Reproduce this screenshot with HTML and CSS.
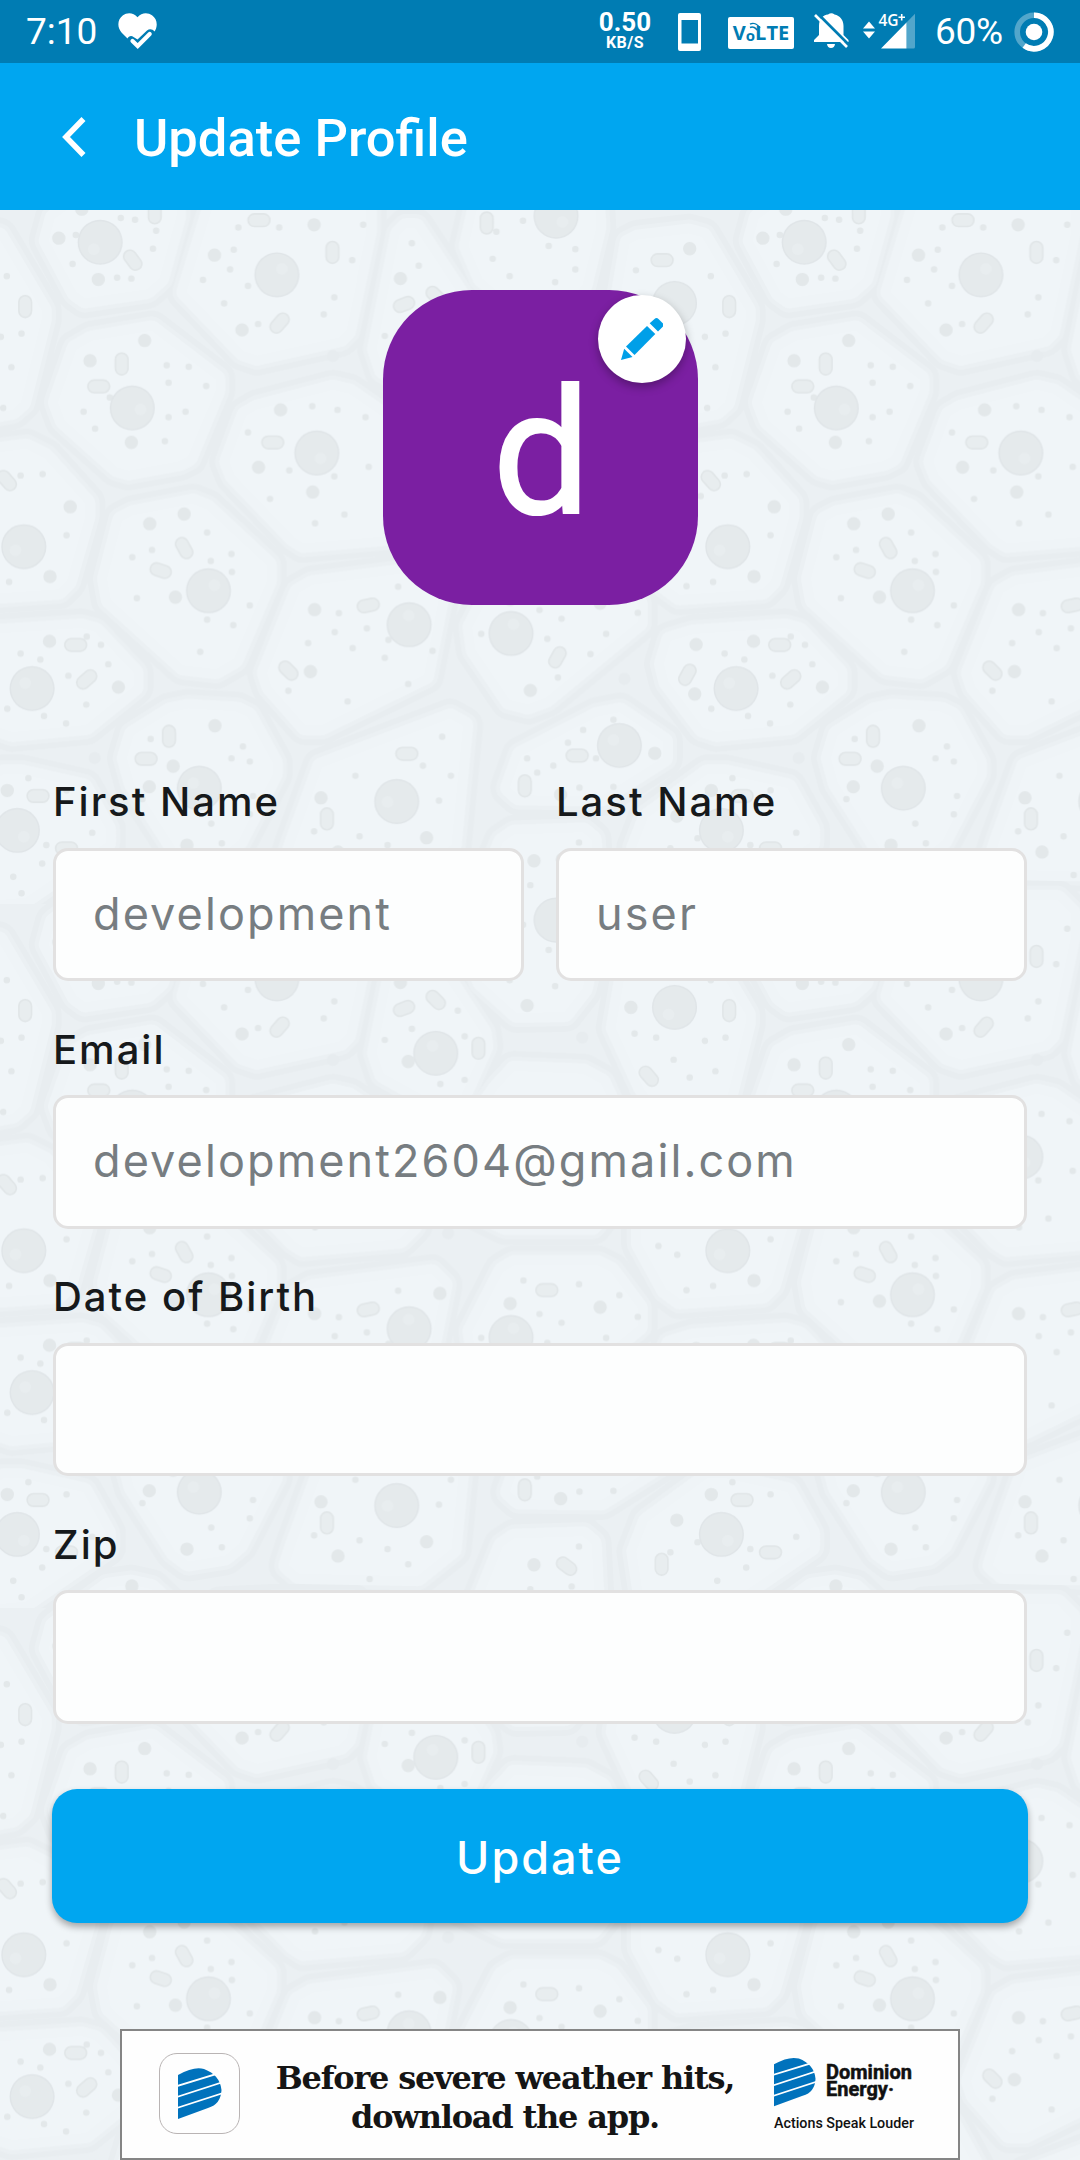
FILE: index.html
```html
<!DOCTYPE html>
<html lang="en">
<head>
<meta charset="utf-8">
<title>Update Profile</title>
<link rel="stylesheet" href="styles.css">
</head>
<body>
<div class="screen">
  <svg class="backdrop" width="1080" height="2160" aria-hidden="true">
    <defs>
      <g id="cells">
        <path d="M105 88L118 40 235 -45 285 -52 330 -42 385 10 385 35 348 170 320 195 185 215 165 200Z"/>
        <path d="M405 200L460 20 480 -5 600 -10 770 -10 800 20 800 70 755 285 740 300 560 340 530 330Z"/>
        <path d="M820 325L870 75 885 60 905 60 1050 280 1054 310 1000 430 960 440 835 370Z"/>
        <path d="M1020 100L1045 -10 1095 -135 1120 -152 1270 -157 1290 -140 1300 60 1270 185 1230 236 1125 238 1050 170Z"/>
        <path d="M1340 270L1370 95 1390 85 1500 72 1530 80 1625 240 1625 260 1580 440 1560 458 1490 470 1440 455 1400 400Z"/>
        <path d="M125 440L165 325 200 305 330 283 470 390 470 415 410 560 390 570 280 590 255 583 140 480Z"/>
        <path d="M498 570L535 470 560 455 725 412 760 420 890 510 925 560 900 700 870 730 660 748 640 735 510 600Z"/>
        <path d="M1028 930L1095 800 1120 785 1300 785 1330 800 1390 880 1390 920 1190 1085 1150 1100 1110 1090 1035 980Z"/>
        <path d="M1085 400L1120 362 1270 368 1310 390 1370 520 1370 600 1290 700 1100 700 1000 650 970 560Z"/>
        <path d="M1395 650L1440 560 1590 540 1630 560 1720 660 1720 690 1680 830 1660 850 1480 862 1450 840 1395 740Z"/>
        <path d="M232 825L265 698 290 685 420 660 450 672 582 795 582 830 510 1000 470 1023 400 1015 240 870Z"/>
        <path d="M580 1030L650 855 680 838 940 805 965 830 925 1035 700 1145 665 1145 590 1060Z"/>
        <path d="M1445 1010L1460 960 1510 945 1710 932 1740 940 1825 1030 1825 1060 1720 1145 1560 1160 1530 1150 1455 1050Z"/>
        <path d="M275 1215L290 1165 370 1115 410 1107 515 1113 540 1125 595 1225 595 1250 520 1395 490 1420 410 1433 380 1410 290 1270Z"/>
        <path d="M700 1235L980 1128 1010 1145 985 1405 910 1465 650 1460 627 1440 640 1400Z"/>
        <path d="M1110 1280L1135 1210 1300 1125 1350 1115 1445 1180 1445 1215 1310 1300 1130 1298Z"/>
        <path d="M1385 1410L1410 1345 1540 1250 1580 1250 1715 1280 1765 1370 1765 1400 1590 1520 1540 1525 1400 1510Z"/>
      </g>
      <g id="nuclei">
        <g stroke-width="98"><path d="M218 92h.1M603 163h.1M949 325h.1M1211 35h.1M1469 225h.1M288 453h.1M690 551h.1M1585 755h.1M454 851h.1M891 925h.1M1113 944h.1M1603 1064h.1M434 1281h.1M864 1310h.1M1349 1188h.1M1571 1373h.1"/></g>
        <path stroke="#e5eaec" stroke-width="92" d="M218 92h.1M603 163h.1M949 325h.1M1211 35h.1M1469 225h.1M288 453h.1M690 551h.1M1585 755h.1M454 851h.1M891 925h.1M1113 944h.1M1603 1064h.1M434 1281h.1M864 1310h.1M1349 1188h.1M1571 1373h.1"/>
        <path stroke="#e8edef" stroke-width="26" d="M204 107h.1M614 150h.1M942 309h.1M1225 48h.1M1456 240h.1M306 456h.1M698 563h.1M1567 763h.1M467 839h.1M890 905h.1M1118 924h.1M1588 1052h.1M421 1270h.1M844 1311h.1M1336 1176h.1M1585 1387h.1"/>
      </g>
      <g id="grains">
        <path stroke-width="14" d="M263 39h.1M294 43h.1M340 67h.1M165 76h.1M158 139h.1M333 106h.1M255 169h.1M286 171h.1M519 60h.1M608 60h.1M791 54h.1M509 108h.1M501 151h.1M442 174h.1M540 187h.1M767 131h.1M488 225h.1M728 212h.1M705 249h.1M562 270h.1M897 94h.1M912 143h.1M997 232h.1M897 272h.1M838 296h.1M1012 288h.1M1012 383h.1M959 392h.1M1139 45h.1M1081 69h.1M1195 100h.1M1253 107h.1M1073 128h.1M1110 166h.1M1253 151h.1M1209 179h.1M1261 -134h.1M1155 -41h.1M1245 -47h.1M1385 153h.1M1548 166h.1M1580 291h.1M1535 298h.1M1558 364h.1M1540 453h.1M1382 282h.1M1429 291h.1M1467 339h.1M1502 378h.1M239 430h.1M273 364h.1M363 360h.1M411 363h.1M367 398h.1M449 405h.1M367 473h.1M404 461h.1M182 461h.1M207 498h.1M359 525h.1M680 449h.1M735 457h.1M796 473h.1M540 506h.1M803 581h.1M630 589h.1M728 602h.1M588 651h.1M750 685h.1M686 704h.1M1626 597h.1M1578 600h.1M1678 730h.1M1553 832h.1M1526 645h.1M1434 745h.1M1475 764h.1M1495 841h.1"/>
        <path stroke-width="14" d="M451 724h.1M504 771h.1M331 762h.1M288 778h.1M459 786h.1M505 810h.1M298 867h.1M544 883h.1M451 914h.1M508 926h.1M436 984h.1M867 842h.1M738 900h.1M729 941h.1M799 933h.1M671 965h.1M768 976h.1M846 958h.1M838 997h.1M942 982h.1M889 1054h.1M628 1069h.1M757 1092h.1M1048 945h.1M1192 956h.1M1320 945h.1M1286 989h.1M1215 1040h.1M1389 899h.1M1140 820h.1M1261 828h.1M1349 852h.1M1175 893h.1M1223 912h.1M1722 951h.1M1753 969h.1M1578 988h.1M1621 1001h.1M1769 1011h.1M1682 1036h.1M1721 1099h.1M1549 1108h.1M1629 1124h.1M1677 1140h.1M328 1174h.1M529 1190h.1M504 1216h.1M544 1223h.1M310 1305h.1M551 1298h.1M544 1338h.1M460 1358h.1M483 1401h.1M963 1169h.1M921 1232h.1M982 1254h.1M774 1254h.1M956 1308h.1M684 1375h.1M783 1386h.1M844 1405h.1M889 1438h.1M805 1470h.1M1336 1132h.1M1270 1154h.1M1237 1182h.1M1148 1216h.1M1298 1216h.1M1205 1232h.1M1170 1247h.1M1262 1280h.1M1336 1278h.1M1595 1259h.1M1678 1286h.1M1734 1378h.1M1625 1445h.1M1562 1474h.1M1580 1510h.1M1634 1405h.1M1519 1390h.1M1460 1412h.1"/>
        <path stroke-width="29" d="M128 83h.1M214 173h.1M178 20h.1M287 -48h.1M684 54h.1M467 120h.1M527 283h.1M872 171h.1M889 343h.1M1148 221h.1M1163 -94h.1M1502 106h.1M1374 225h.1M315 306h.1M196 350h.1M286 528h.1M611 457h.1M563 582h.1M681 636h.1M1686 668h.1M1642 820h.1M326 705h.1M401 684h.1M382 865h.1M685 892h.1M676 1027h.1M958 848h.1M1111 870h.1M1307 878h.1M1155 1068h.1M1641 961h.1M1791 1061h.1M1516 968h.1M1513 1076h.1M468 1145h.1M377 1233h.1M325 1278h.1M407 1405h.1M699 1302h.1M929 1389h.1M736 1420h.1M1426 1205h.1M1221 1295h.1M1549 1286h.1M1474 1342h.1"/>
        <path stroke="#e7ecef" stroke-width="26" d="M725 340h.1M206 1215h.1M1360 1043h.1M1268 291h.1M976 717h.1"/>
      </g>
      <g id="rods">
        <path d="M337 16v22M283 123l12 16M554 44h20M724 104v20M602 276l14 -16M871 231l18 -7M942 202l14 14M1042 304v20M1060 40v20M1226 -97l16 12M1432 131h20M1406 367l14 16M1588 222v20M265 347v20M205 406h20M584 528h20M1541 603l14 16M396 749l10 18M341 804l18 6M792 885l20 -4M621 1018l14 14M1181 841h20M1209 1005l10 -18M1688 969h20M1714 1051l16 -14M1492 1043l10 -18M368 1158v20M308 1217h20M876 1206h20M712 1338v20M1247 1210h20M1143 1266v20M1606 1298h20M1668 1412h20M1441 1428v20"/>
      </g>
      <g id="tissue">
        <use href="#grains" stroke="#e3e8ea"/>
        <use href="#rods" stroke="#e1e6e8" stroke-width="31"/>
        <use href="#rods" stroke="#e8edef" stroke-width="24"/>
        <use href="#nuclei" stroke="#e0e5e8"/>
      </g>
      <g id="tile">
        <use href="#cells" stroke="#e8edf0" stroke-width="84"/>
        <use href="#cells" stroke="#ebf0f3" stroke-width="60"/>
      </g>
      <g id="bodies">
        <use href="#cells" stroke="#eff4f7" fill="#eff4f7" stroke-width="42"/>
        <use href="#cells" fill="#f0f5f8" stroke="none"/>
      </g>
      <pattern id="skin" width="1533.2" height="1533.2" patternUnits="userSpaceOnUse" patternTransform="translate(0 200) scale(.45918)">
        <rect width="1534" height="1534" fill="#ebf0f3"/>
        <g fill="none" stroke-linejoin="round" stroke-linecap="round">
          <use href="#tile"/><use href="#tile" x="-1533.2"/><use href="#tile" y="1533.2"/><use href="#tile" x="-1533.2" y="1533.2"/>
          <use href="#bodies"/><use href="#bodies" x="-1533.2"/><use href="#bodies" y="1533.2"/><use href="#bodies" x="-1533.2" y="1533.2"/>
          <use href="#tissue"/><use href="#tissue" x="-1533.2"/><use href="#tissue" y="1533.2"/><use href="#tissue" x="-1533.2" y="1533.2"/>
        </g>
      </pattern>
    </defs>
    <rect width="1080" height="2160" fill="url(#skin)"/>
  </svg>

  <div class="status">
    <span class="clock">7:10</span>
    <svg class="heart" width="39" height="36" viewBox="0 0 39 36"><path fill="#fff" d="M19.500 4.200C15.500-.8 9-.8 5 2.200C-.8 6.500-1 14 3.500 19.500L9.500 25.500C10.500 23 13.500 22.300 15.500 24L19.500 26.500L29 17.500C31.500 15.500 34.500 16 36.500 18.500C40 13.500 39.500 6 34 2.200C30-.8 23.500-.8 19.500 4.200Z"/><path fill="none" stroke="#fff" stroke-width="4.200" stroke-linecap="round" d="M14.500 28l5.200 5 12-12"/></svg>
    <span class="speed"><b>0.50</b><i>KB/S</i></span>
    <svg class="phone" width="23" height="38" viewBox="0 0 23 38"><path fill="#fff" fill-rule="evenodd" d="M2 0h19q2 0 2 2v34q0 2-2 2H2q-2 0-2-2V2Q0 0 2 0ZM3.500 7v23.500h16.500V7Z"/></svg>
    <span class="volte"><span>V</span><span class="volte-o">o<svg width="12" height="11" viewBox="0 0 12 11"><path d="M1 2.200C5 0 9 3 11 6M1 5.500c3-1.500 6 .5 7 2.700" fill="none" stroke="#007cb3" stroke-width="1.500"/></svg></span><span>LTE</span></span>
    <svg class="bell" width="36" height="36" viewBox="0 0 36 36"><path fill="#fff" d="M0 29v-2l5-5V13C5 6 9 2 14 1.500Q17.500-1 20.500 1.500C26 2.500 29.500 7 29.500 13v9l5 5v2ZM13 31h8q-.5 4-4 4t-4-4Z"/><path stroke="#007cb3" stroke-width="3" d="M4 1l31 31"/><path stroke="#fff" stroke-width="2.600" d="M1 2l32 32"/></svg>
    <svg class="signal" width="53" height="36" viewBox="0 0 53 36"><path fill="#fff" d="M0 15.500L6 8.500l6 7ZM0 18.500h12L6 25.500ZM18 35.500L43.500 9.500V35.500Z"/><path fill="#fff" fill-opacity=".32" d="M43.500 9.500L52 .8V34q0 1.500-1.500 1.500h-7Z"/><text x="15.500" y="12.800">4G</text><path d="M35.500 4.200h6.500M38.700 1v6.500" stroke="#fff" stroke-width="1.600"/></svg>
    <span class="percent">60%</span>
    <svg class="battery" width="40" height="40" viewBox="0 0 40 40"><circle cx="20" cy="20" r="16.800" fill="none" stroke="#fff" stroke-opacity=".32" stroke-width="5.600"/><path d="M20 3.200A16.800 16.800 0 1 1 10.200 33.600" fill="none" stroke="#fff" stroke-width="5.600"/><circle cx="20" cy="20" r="8.300" fill="#fff"/></svg>
  </div>

  <header class="bar">
    <svg class="back" width="24" height="40" viewBox="0 0 24 40"><path d="M21.500 2L4 20l17.500 18" fill="none" stroke="#fff" stroke-width="5.600"/></svg>
    <h1>Update Profile</h1>
  </header>

  <main>
    <div class="avatar">d
      <span class="edit"><svg width="42" height="42" viewBox="0 0 42 42"><g fill="#009fe8"><path d="M33.500 1q2-2 4 0l4 4q2 2 0 4l-4.500 4.500-8.300-8.300Z"/><path d="M26 8l8.300 8-20.800 21L5 28.500Z"/><path d="M3.200 30.700l8.300 8.300L0 42Z"/></g></svg></span>
    </div>
    <form>
      <div class="pair">
        <label>First Name<input type="text" placeholder="development"></label>
        <label>Last Name<input type="text" placeholder="user"></label>
      </div>
      <label>Email<input type="text" placeholder="development2604@gmail.com"></label>
      <label>Date of Birth<input type="text"></label>
      <label>Zip<input type="text"></label>
      <button type="button">Update</button>
    </form>
    <aside class="ad">
      <span class="app"><svg width="44" height="51" viewBox="0 0 44 51"><use href="#dom"/></svg></span>
      <p><span>Before severe weather hits,</span><span>download the app.</span></p>
      <div class="brand">
        <div class="logo"><svg width="42" height="52" viewBox="0 0 44 51"><g id="dom"><path fill="#0072bc" d="M0 7Q16-2 26 1Q42 7 43.500 22Q43 36 30 40L0 51Z"/><path d="M-1 18L45 4M-1 29L45 14M-1 40L45 25" fill="none" stroke="#fff" stroke-width="1.800"/></g></svg><b>Dominion<br>Energy<span class="mark">·</span></b></div>
        <small>Actions Speak Louder</small>
      </div>
    </aside>
  </main>
</div>
</body>
</html>
```
FILE: styles.css
```css
* { box-sizing: border-box; }
body { margin: 0; font-family: Roboto, sans-serif; }
.screen { position: relative; width: 1080px; height: 2160px; overflow: hidden; background: #ebf0f3; }
.backdrop { position: absolute; left: 0; top: 0; }
.status, .bar, main { position: relative; }

.status { height: 63px; background: #007cb3; color: #fff; display: flex; align-items: flex-start; padding-left: 26px; }
.status > * { flex: none; }
.clock, .percent { font-size: 37px; line-height: 63px; }
.clock { width: 92px; }
.heart { margin-top: 13px; }
.speed { width: 60px; margin: 9px 0 0 438px; display: flex; flex-direction: column; align-items: center; }
.speed b { font-size: 26px; line-height: 26px; font-weight: 700; }
.speed i { font-size: 16px; line-height: 15px; font-weight: 700; font-style: normal; letter-spacing: .5px; }
.phone { margin: 13px 0 0 23px; }
.volte { display: flex; justify-content: center; align-items: center; margin: 17px 0 0 27px; width: 66px; height: 32px; border-radius: 2px; background: #fff; color: #007cb3; font: 700 20px/32px "Open Sans", sans-serif; }
.volte-o { position: relative; font-size: 15px; padding-top: 4px; }
.volte-o svg { position: absolute; left: 3px; top: 7px; }
.bell { margin: 13px 0 0 20px; }
.signal { margin: 13px 0 0 13px; overflow: visible; }
.signal text { font: 600 15.500px "Open Sans", sans-serif; fill: #fff; }
.percent { margin-left: 19px; width: 79px; letter-spacing: -.3px; }
.battery { margin-top: 12px; }

.bar { height: 147px; background: #00a6f0; color: #fff; display: flex; align-items: center; padding-left: 62px; gap: 48px; }
.bar h1 { margin: 0; font-size: 52.500px; line-height: 60px; font-weight: 500; padding-top: 3px; }

main { display: flex; flex-direction: column; align-items: center; padding-top: 80px; font-family: Inter, sans-serif; }
.avatar { position: relative; width: 315px; height: 315px; padding-left: 3px; border-radius: 89px; background: #7b1fa2; color: #fff; font: 400 174px/328px Roboto, sans-serif; text-align: center; -webkit-text-stroke: 2px #fff; }
.edit { position: absolute; right: 12px; top: 5px; width: 88px; height: 88px; border-radius: 50%; background: #fff; display: flex; align-items: center; justify-content: center; box-shadow: 0 4px 10px rgba(0,0,0,.3); }

form { width: 974px; margin-top: 173px; display: flex; flex-direction: column; gap: 44.500px; }
.pair { display: flex; gap: 32px; }
.pair label { flex: 1; min-width: 0; }
label { display: flex; flex-direction: column; gap: 21.500px; font-size: 40px; line-height: 48px; font-weight: 500; color: #16191b; letter-spacing: 2px; }
input { width: 100%; height: 133.500px; border: 3px solid #e2e1e1; border-radius: 15px; background: #fdfefe; padding: 0 37px 2px; font: 400 45px Inter, sans-serif; letter-spacing: 2.100px; color: #777d81; }
input::placeholder { color: #777d81; opacity: 1; }
button { width: 976px; height: 134px; margin: 21px 0 0 -1px; padding: 2px 0 0; border: 0; border-radius: 25px; background: #00a6f0; color: #fff; font: 500 45px Inter, sans-serif; letter-spacing: 2px; box-shadow: 0 4px 7px rgba(0,0,0,.32); }

.ad { width: 840px; height: 131px; margin-top: 105.500px; background: #fefefe; border: 2px solid #858585; display: flex; align-items: flex-start; padding: 22px 0 0 37px; }
.app { width: 81px; height: 81px; border: 1.500px solid #b9b4b4; border-radius: 18px; display: flex; align-items: center; justify-content: center; }
.ad p { margin: 6px 0 0 30px; width: 470px; display: flex; flex-direction: column; align-items: center; white-space: nowrap; font: 700 32px/39px "DejaVu Serif", serif; color: #151515; letter-spacing: -1.200px; }
.brand { margin: 3px 0 0 34px; color: #111; }
.logo { display: flex; gap: 10px; height: 58px; }
.logo b { font: 700 20px/17px Roboto, sans-serif; padding-top: 8px; -webkit-text-stroke: .5px #111; }
.brand small { display: block; font: 500 14.300px/18px Roboto, sans-serif; white-space: nowrap; }
```
